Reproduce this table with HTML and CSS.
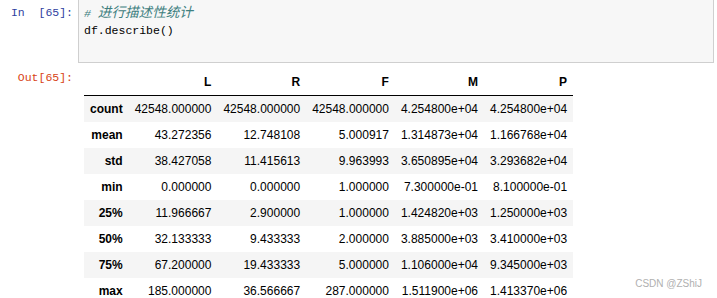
FILE: index.html
```html
<!DOCTYPE html>
<html lang="zh">
<head>
    <meta charset="UTF-8">
    <title>df.describe()</title>
    <link rel="stylesheet" href="styles.css">
</head>
<body>
    <div class="cell">
        <div class="input">
            <div class="prompt prompt-in">In&nbsp;&nbsp;[65]:</div>
            <div class="code">
                <div class="line comment"># <span class="cjk">进行描述性统计</span></div>
                <div class="line">df.describe()</div>
            </div>
        </div>

        <div class="output">
            <div class="prompt prompt-out">Out[65]:</div>
            <div class="output-content">
                <table class="dataframe">
                    <thead>
                        <tr><th></th><th>L</th><th>R</th><th>F</th><th>M</th><th>P</th></tr>
                    </thead>
                    <tbody>
                        <tr><th>count</th><td>42548.000000</td><td>42548.000000</td><td>42548.000000</td><td>4.254800e+04</td><td>4.254800e+04</td></tr>
                        <tr><th>mean</th><td>43.272356</td><td>12.748108</td><td>5.000917</td><td>1.314873e+04</td><td>1.166768e+04</td></tr>
                        <tr><th>std</th><td>38.427058</td><td>11.415613</td><td>9.963993</td><td>3.650895e+04</td><td>3.293682e+04</td></tr>
                        <tr><th>min</th><td>0.000000</td><td>0.000000</td><td>1.000000</td><td>7.300000e-01</td><td>8.100000e-01</td></tr>
                        <tr><th>25%</th><td>11.966667</td><td>2.900000</td><td>1.000000</td><td>1.424820e+03</td><td>1.250000e+03</td></tr>
                        <tr><th>50%</th><td>32.133333</td><td>9.433333</td><td>2.000000</td><td>3.885000e+03</td><td>3.410000e+03</td></tr>
                        <tr><th>75%</th><td>67.200000</td><td>19.433333</td><td>5.000000</td><td>1.106000e+04</td><td>9.345000e+03</td></tr>
                        <tr><th>max</th><td>185.000000</td><td>36.566667</td><td>287.000000</td><td>1.511900e+06</td><td>1.413370e+06</td></tr>
                    </tbody>
                </table>
            </div>
        </div>
    </div>

    <div class="watermark">CSDN @ZShiJ</div>
</body>
</html>
```

FILE: styles.css
```css
* {
    margin: 0;
    padding: 0;
    box-sizing: border-box;
}

body {
    font-family: 'Liberation Sans', Arial, sans-serif;
    background: white;
    color: #000;
    width: 717px;
    height: 298px;
    overflow: hidden;
    position: relative;
}

.cell {
    padding-right: 3px;
}

.input {
    display: flex;
    margin-top: -1px;
}

.prompt {
    flex: 0 0 78px;
    padding-right: 5px;
    text-align: right;
    font-family: 'Liberation Mono', monospace;
    font-size: 11.5px;
    line-height: 17px;
    white-space: nowrap;
}

.prompt-in {
    color: #303f9f;
    padding-top: 5px;
}

.prompt-out {
    color: #d84315;
}

.code {
    flex: 1;
    background: #f7f7f7;
    border: 1px solid #cfcfcf;
    padding: 5px 4px 23px 5px;
    font-family: 'Liberation Mono', monospace;
    font-size: 11.5px;
    line-height: 17px;
}

.line {
    white-space: pre;
    height: 17px;
}

.comment {
    color: #408080;
    font-style: italic;
}

.cjk {
    font-family: 'Noto Sans CJK SC', sans-serif;
    font-size: 13.6px;
    line-height: 1;
}

.output {
    display: flex;
    padding-top: 6px;
}

.output-content {
    padding-left: 6px;
}

.dataframe {
    border-collapse: collapse;
    border-spacing: 0;
    font-size: 12px;
    line-height: 14px;
}

.dataframe th,
.dataframe td {
    padding: 6px;
    text-align: right;
    vertical-align: middle;
    white-space: nowrap;
}

.dataframe th {
    font-weight: bold;
}

.dataframe thead th {
    border-bottom: 1px solid #000;
}

.dataframe tbody tr:nth-child(odd) {
    background: #f5f5f5;
}

.watermark {
    position: absolute;
    right: 15px;
    top: 277px;
    font-size: 10px;
    line-height: 14px;
    color: #b0b0b0;
}
```
